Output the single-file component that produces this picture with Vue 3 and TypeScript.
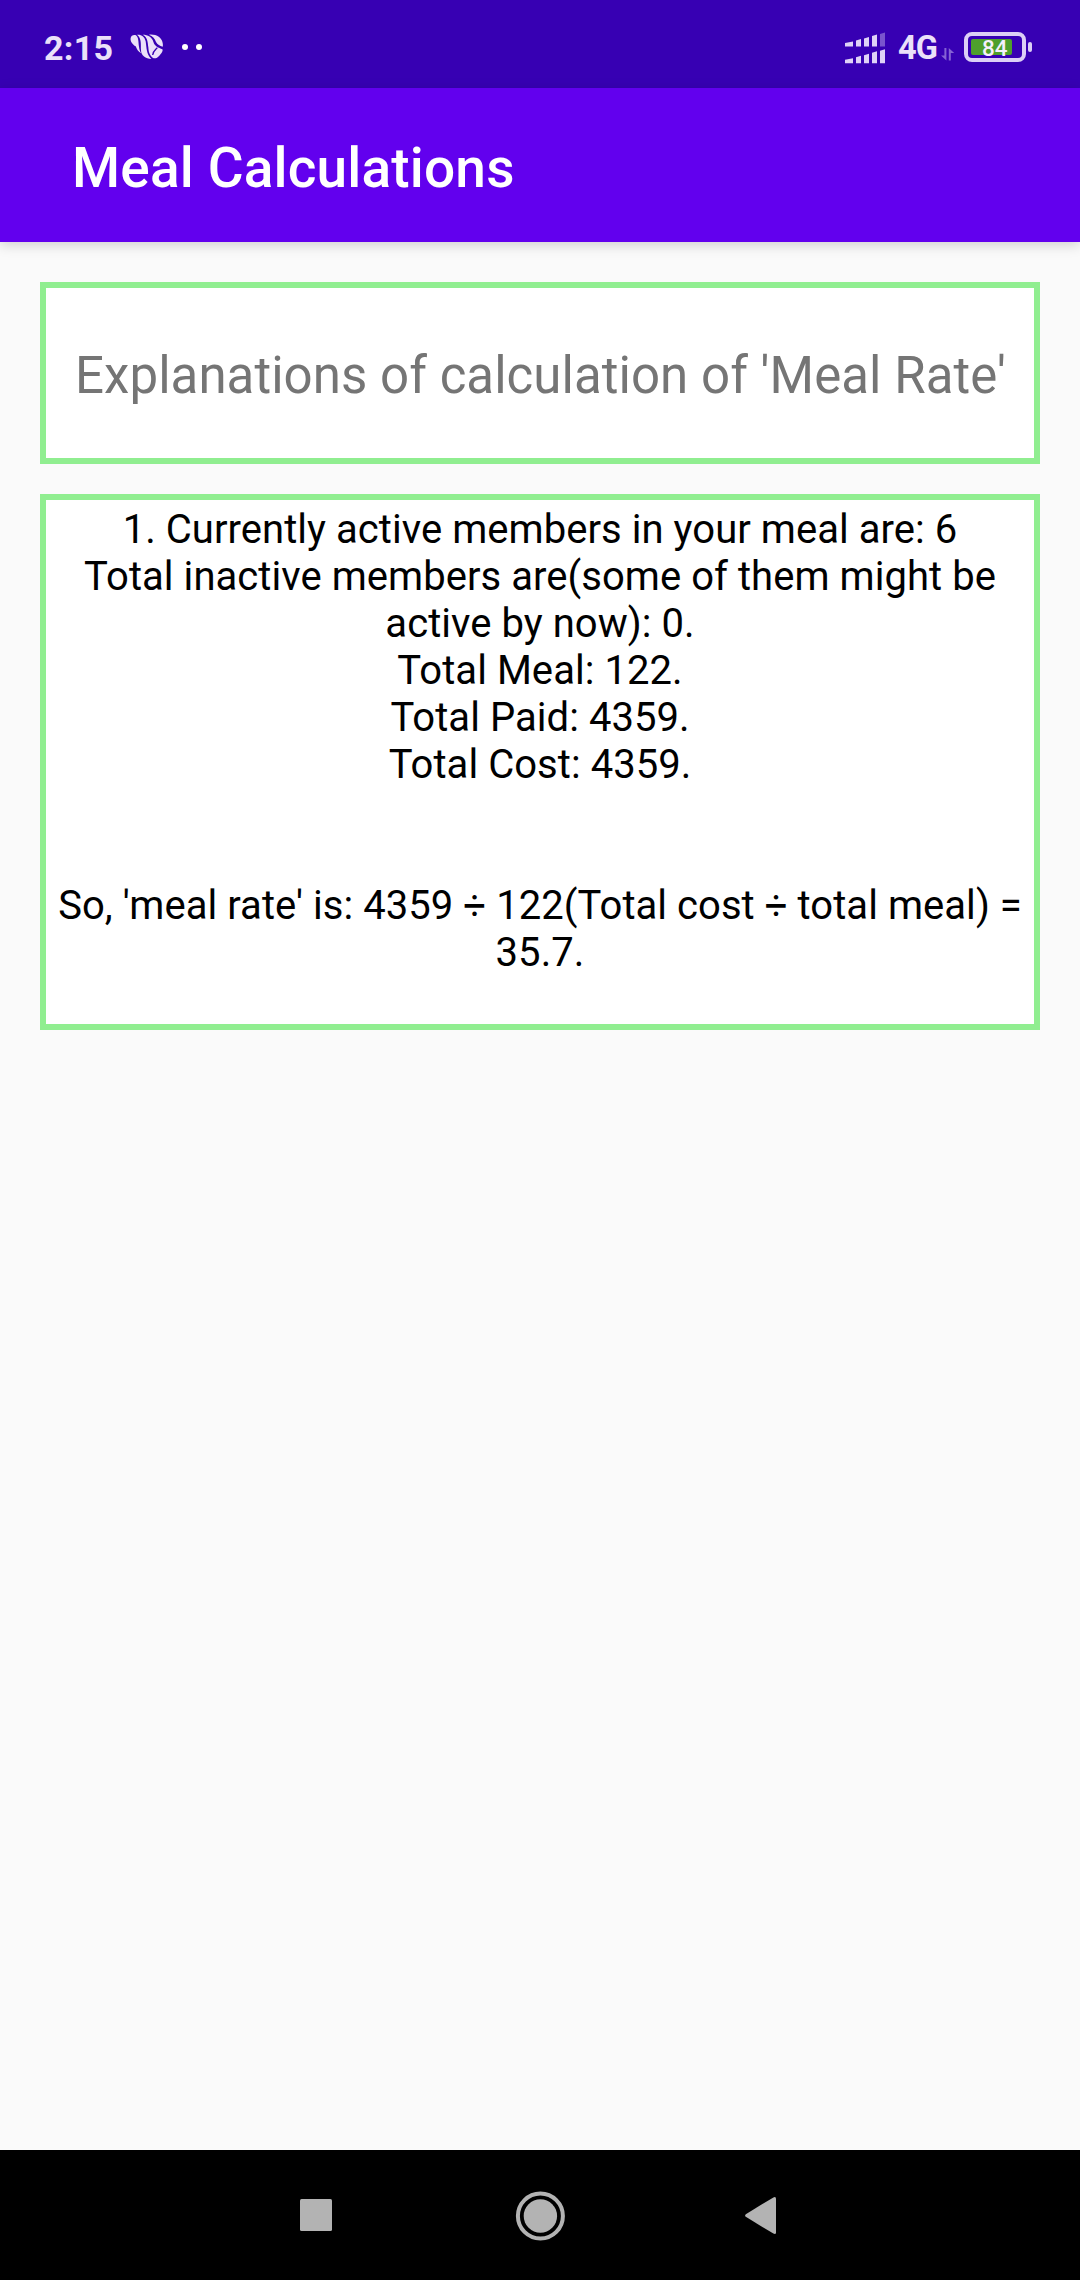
<script setup lang="ts">
interface Bar {
  x: number
  h: number
  faded?: boolean
}

const time = '2:15'
const network = '4G'
const battery = 84
const title = 'Meal Calculations'
const heading = "Explanations of calculation of 'Meal Rate'"

const topBars: Bar[] = [
  { x: 0, h: 5 },
  { x: 11, h: 7.5 },
  { x: 19, h: 9.5 },
  { x: 27, h: 12 },
  { x: 35, h: 14, faded: true },
]
const bottomBars: Bar[] = [
  { x: 0, h: 5 },
  { x: 11, h: 7.5 },
  { x: 19, h: 9.5 },
  { x: 27, h: 12 },
  { x: 35, h: 14 },
]

function barPath(bar: Bar, base: number): string {
  const w = bar.x === 0 ? 8 : 5
  return `M${bar.x} ${base}V${base - bar.h + 1.5}L${bar.x + w} ${base - bar.h}V${base}Z`
}

const members = 6
const inactive = 0
const meals = 122
const paid = 4359
const cost = 4359
const rate = (cost / meals).toFixed(1)

const explanation = [
  `1. Currently active members in your meal are: ${members}`,
  `Total inactive members are(some of them might be active by now): ${inactive}.`,
  `Total Meal: ${meals}.`,
  `Total Paid: ${paid}.`,
  `Total Cost: ${cost}.`,
  '',
  '',
  `So, 'meal rate' is: ${cost} ÷ ${meals}(Total cost ÷ total meal) = ${rate}.`,
].join('\n')
</script>

<template>
  <div class="screen">
    <header class="status">
      <span class="time">{{ time }}</span>
      <svg class="notify" width="34" height="26" viewBox="0 0 102 78">
        <path d="M2 12C3 4 12 1 18 4C26 10 25 25 27 38C28 47 30 52 34 58C25 54 21 46 17 37C8 32 0 22 2 12Z" />
        <path d="M21 2C35 1 44 8 47 22C50 42 49 60 64 75C47 75 33 65 33 49C32 32 36 14 21 2Z" />
        <path d="M38 2C54 2 66 9 70 23C74 38 86 40 97 46C100 50 95 58 88 65C82 72 74 75 68 71C57 62 56 52 55 40C53 24 53 10 38 2Z" />
        <path d="M57 2C79 0 95 10 98 27C99 33 99 36 98 38C90 36 82 32 78 24C74 13 68 6 57 2Z" />
        <path d="M82 41C76 48 69 51 68 63" fill="none" stroke="#3700b3" stroke-width="4" />
      </svg>
      <span class="dots"><i></i><i></i></span>
      <span class="spacer"></span>
      <svg class="signal" width="40" height="32" viewBox="0 0 40 32">
        <path v-for="b in topBars" :key="'t' + b.x" :d="barPath(b, 14.5)" :class="{ faded: b.faded }" />
        <path v-for="b in bottomBars" :key="'b' + b.x" :d="barPath(b, 31.3)" />
      </svg>
      <span class="network">{{ network }}</span>
      <svg class="data" width="14" height="13" viewBox="0 0 14 13">
        <path d="M3.4 0H5.4V12.5L0 7.6H3.4Z" />
        <path d="M7.8 0L13.2 4.9H9.8V12.5H7.8Z" />
      </svg>
      <div class="battery">
        <div class="level"></div>
        <span class="percent">{{ battery }}</span>
      </div>
      <span class="nub"></span>
    </header>

    <div class="appbar"><h1>{{ title }}</h1></div>

    <main class="content">
      <section class="card heading">{{ heading }}</section>
      <section class="card explanation">{{ explanation }}</section>
    </main>

    <nav class="navbar">
      <svg width="32" height="32" viewBox="0 0 32 32"><rect width="32" height="32" rx="1.5" /></svg>
      <svg class="home" width="50" height="50" viewBox="0 0 50 50">
        <circle cx="25.4" cy="25" r="22.5" fill="none" stroke="#b3b3b3" stroke-width="4" />
        <circle cx="25.4" cy="25" r="16.7" />
      </svg>
      <svg class="back" width="31" height="37" viewBox="0 0 31 37">
        <path d="M28.4 0.4Q31 -0.6 31 1.6V35.4Q31 37.6 28.4 36.6L0.8 19.8Q-0.6 18.5 0.8 17.2Z" />
      </svg>
    </nav>
  </div>
</template>

<style>
body {
  margin: 0;
}
</style>

<style scoped>
.screen {
  display: flex;
  flex-direction: column;
  width: 1080px;
  height: 2280px;
  background: #fafafa;
  font-family: Roboto, 'Noto Sans', sans-serif;
}

.status {
  display: flex;
  align-items: flex-start;
  box-sizing: border-box;
  height: 88px;
  padding: 0 48px 0 44px;
  background: #3700b3;
  color: #ebe0f9;
}

.time {
  width: 86px;
  margin-top: 28px;
  font-size: 34px;
  line-height: 40px;
  font-weight: 700;
  letter-spacing: 0.3px;
}

.notify {
  margin-top: 34px;
  fill: #ebe0f9;
}

.dots {
  display: flex;
  gap: 8px;
  margin: 44px 0 0 18px;
}

.dots i {
  width: 6px;
  height: 6px;
  border-radius: 50%;
  background: #fff;
}

.spacer {
  flex: 1;
}

.signal {
  margin-top: 31.5px;
  fill: #dfd2f7;
}

.signal .faded {
  opacity: 0.4;
}

.network {
  width: 43px;
  margin: 29px 0 0 13px;
  font-size: 32.5px;
  line-height: 39px;
  font-weight: 700;
  letter-spacing: -0.8px;
}

.data {
  margin-top: 47.5px;
  fill: #8562d4;
}

.battery {
  position: relative;
  box-sizing: border-box;
  width: 62px;
  height: 30px;
  margin: 32px 0 0 9px;
  border: 4px solid #dccff6;
  border-radius: 8px;
}

.level {
  width: 41px;
  height: 16px;
  margin: 3px;
  border-radius: 2px;
  background: #4e9f2c;
}

.percent {
  position: absolute;
  left: 14px;
  top: -1px;
  color: #f5f0fd;
  font-size: 22.5px;
  line-height: 26px;
  font-weight: 500;
}

.nub {
  width: 4px;
  height: 10px;
  margin: 42px 0 0 2px;
  border-radius: 2px;
  background: #dccff6;
}

.appbar {
  box-sizing: border-box;
  height: 154px;
  padding: 48px 72px 0;
  background: #6200ee;
  box-shadow: 0 3px 12px rgba(0, 0, 0, 0.17);
}

h1 {
  margin: 0;
  color: #fff;
  font-size: 55px;
  line-height: 64px;
  font-weight: 500;
  letter-spacing: 0.16px;
}

.content {
  display: flex;
  flex: 1;
  flex-direction: column;
  gap: 30px;
  padding: 40px 40px 0;
}

.card {
  box-sizing: border-box;
  border: 6px solid #90ee90;
  background: #fff;
  text-align: center;
}

.heading {
  height: 182px;
  padding: 58px 0 0 1px;
  color: #757575;
  font-size: 51px;
  line-height: 59px;
  letter-spacing: 0.05px;
  white-space: nowrap;
}

.explanation {
  height: 536px;
  padding: 6px;
  color: #000;
  font-size: 40px;
  line-height: 47px;
  letter-spacing: 0.05px;
  white-space: pre-line;
}

.navbar {
  display: flex;
  align-items: center;
  box-sizing: border-box;
  height: 130px;
  padding: 0 300px;
  background: #000;
}

.navbar svg {
  fill: #b3b3b3;
}

.home {
  margin-left: 183px;
  margin-top: 1px;
}

.back {
  margin-left: 180px;
  margin-top: 1px;
}
</style>
